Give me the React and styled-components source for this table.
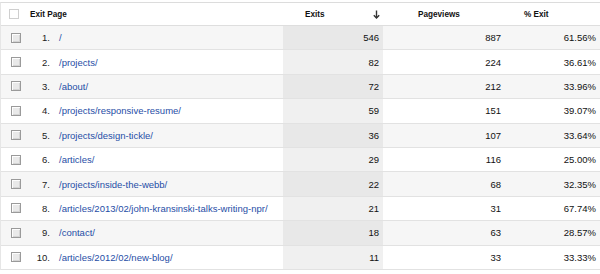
import React from "react";
import styled, { createGlobalStyle } from "styled-components";

const GlobalStyle = createGlobalStyle`
  body {
    margin: 0;
    background: #fff;
    font-family: "Liberation Sans", Arial, sans-serif;
  }
`;

const COLS = "27px 25px 230px 100px 121px 1fr";

const Table = styled.div`
  margin-top: 2px;
  border-top: 1px solid #dcdcdc;
  border-left: 1px solid #e6e6e6;
  width: 600px;
  box-sizing: border-box;
`;

const HeaderRow = styled.div`
  display: grid;
  grid-template-columns: ${COLS};
  height: 23px;
  box-sizing: border-box;
  border-bottom: 1px solid #dedede;
  background: #fff;
  font-size: 8.2px;
  font-weight: bold;
  color: #111;
`;

const Row = styled.div`
  display: grid;
  grid-template-columns: ${COLS};
  height: 24.4px;
  box-sizing: border-box;
  border-bottom: 1px solid #e2e2e2;
  background: ${props => (props.$odd ? "#f6f6f6" : "#fff")};
  font-size: 9.5px;
  color: #111;
`;

const Cell = styled.div`
  display: flex;
  align-items: center;
  justify-content: ${props => (props.$right ? "flex-end" : "flex-start")};
  padding: 0 ${props => props.$pr || 0}px 0 ${props => props.$pl || 0}px;
  background: ${props => props.$bg || "transparent"};
  white-space: nowrap;
  overflow: hidden;
`;

const HeadCheck = styled.span`
  width: 10px;
  height: 10px;
  box-sizing: border-box;
  border: 1px solid #cfcfcf;
  background: #fff;
`;

const Check = styled.span`
  width: 10px;
  height: 10px;
  box-sizing: border-box;
  border: 1px solid #9a9a9a;
  background: #e9e9e9;
  box-shadow: inset 1px 1px 0 #fdfdfd, inset -1px -1px 0 #d4d4d4;
`;

const Num = styled.span`
  color: #222;
`;

const PathLink = styled.a`
  color: #1f4ea6;
  text-decoration: none;
`;

const SortArrow = () => (
  <svg width="7" height="9" viewBox="0 0 7 9">
    <path d="M3.5 0.5 V8" stroke="#333" strokeWidth="1.4" fill="none" />
    <path d="M0.8 5.2 L3.5 8 L6.2 5.2" stroke="#333" strokeWidth="1.4" fill="none" />
  </svg>
);

const rows = [
  ["/", 546, 887, "61.56%"],
  ["/projects/", 82, 224, "36.61%"],
  ["/about/", 72, 212, "33.96%"],
  ["/projects/responsive-resume/", 59, 151, "39.07%"],
  ["/projects/design-tickle/", 36, 107, "33.64%"],
  ["/articles/", 29, 116, "25.00%"],
  ["/projects/inside-the-webb/", 22, 68, "32.35%"],
  ["/articles/2013/02/john-kransinski-talks-writing-npr/", 21, 31, "67.74%"],
  ["/contact/", 18, 63, "28.57%"],
  ["/articles/2012/02/new-blog/", 11, 33, "33.33%"],
];

const App = () => (
  <>
    <GlobalStyle />
    <Table>
      <HeaderRow>
        <Cell $pl={8}>
          <HeadCheck />
        </Cell>
        <Cell $pl={2} style={{ gridColumn: "2 / 4" }}>
          Exit Page
        </Cell>
        <Cell $pl={22} $pr={3} style={{ justifyContent: "space-between" }}>
          <span>Exits</span>
          <SortArrow />
        </Cell>
        <Cell $pl={35}>Pageviews</Cell>
        <Cell $pl={20}>% Exit</Cell>
      </HeaderRow>
      {rows.map(([path, exits, views, rate], i) => (
        <Row key={path} $odd={i % 2 === 0}>
          <Cell $pl={10}>
            <Check />
          </Cell>
          <Cell $right $pr={3}>
            <Num>{i + 1}.</Num>
          </Cell>
          <Cell $pl={6}>
            <PathLink href="#">{path}</PathLink>
          </Cell>
          <Cell $right $pr={4} $bg={i % 2 === 0 ? "#e8e8e8" : "#f0f0f0"}>
            {exits}
          </Cell>
          <Cell $right $pr={3}>
            {views}
          </Cell>
          <Cell $right $pr={4}>
            {rate}
          </Cell>
        </Row>
      ))}
    </Table>
  </>
);

export default App;
